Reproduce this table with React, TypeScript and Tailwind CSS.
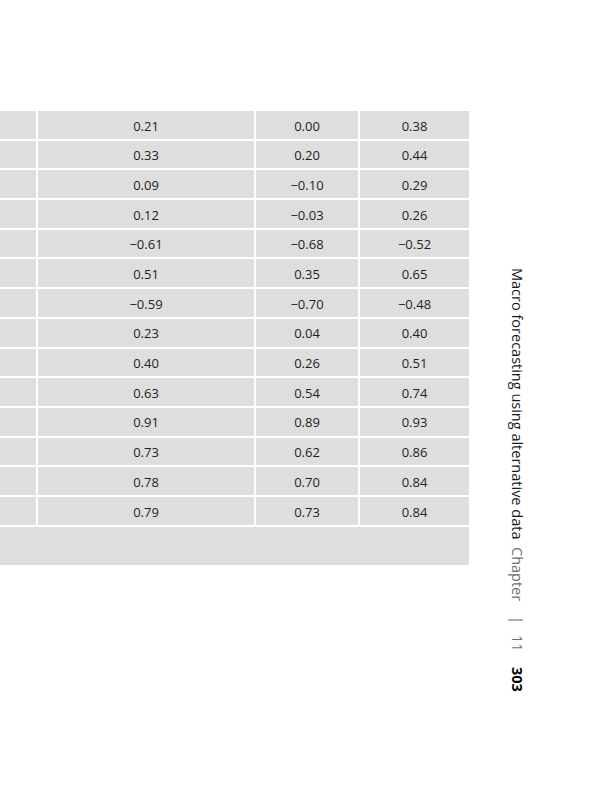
const rows: [string, string, string][] = [
  ['0.21', '0.00', '0.38'],
  ['0.33', '0.20', '0.44'],
  ['0.09', '−0.10', '0.29'],
  ['0.12', '−0.03', '0.26'],
  ['−0.61', '−0.68', '−0.52'],
  ['0.51', '0.35', '0.65'],
  ['−0.59', '−0.70', '−0.48'],
  ['0.23', '0.04', '0.40'],
  ['0.40', '0.26', '0.51'],
  ['0.63', '0.54', '0.74'],
  ['0.91', '0.89', '0.93'],
  ['0.73', '0.62', '0.86'],
  ['0.78', '0.70', '0.84'],
  ['0.79', '0.73', '0.84'],
];

function Row({ cells }: { cells: [string, string, string] }) {
  return (
    <div className="grid grid-cols-[36px_216px_102px_109px] gap-[2px] h-[27.7px]">
      <div className="bg-[#dedede]" />
      {cells.map((c, i) => (
        <div key={i} className="bg-[#dedede] flex items-center justify-center pt-[3px]">
          {c}
        </div>
      ))}
    </div>
  );
}

export default function App() {
  return (
    <div className="w-[599px] h-[800px] bg-white flex font-['Open_Sans',sans-serif]">
      <div className="w-[469px] shrink-0 pt-[111px]">
        <div className="flex flex-col gap-[2px] text-[13px] text-[#1e1e1e]">
          {rows.map((r, i) => (
            <Row key={i} cells={r} />
          ))}
          <div className="h-[38px] bg-[#dedede]" />
        </div>
      </div>
      <div className="pl-[40px] pt-[268px]">
        <p className="[writing-mode:vertical-rl] text-[14.5px] leading-none whitespace-nowrap text-[#1a1a1a]">
          <span>Macro forecasting using alternative data</span>
          <span className="ms-[8px] text-[#6f6f6f]">Chapter</span>
          <span className="ms-[14px] text-[#6f6f6f]">|</span>
          <span className="ms-[11px] text-[#6f6f6f]">11</span>
          <span className="ms-[16px] font-bold text-black">303</span>
        </p>
      </div>
    </div>
  );
}
